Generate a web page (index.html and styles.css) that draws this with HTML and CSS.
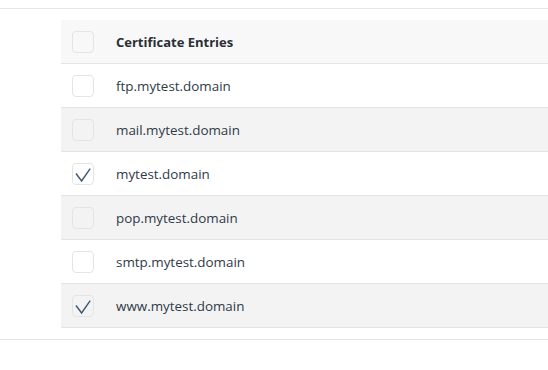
FILE: index.html
```html
<!DOCTYPE html>
<html lang="en">
<head>
  <meta charset="UTF-8" />
  <title>Certificate Entries</title>
  <link rel="stylesheet" href="styles.css">
</head>
<body>
  <div class="panel">
    <table class="entries">
      <thead>
        <tr>
          <th class="check-col"><span class="box"></span></th>
          <th>Certificate Entries</th>
        </tr>
      </thead>
      <tbody>
        <tr>
          <td class="check-col"><span class="box"></span></td>
          <td>ftp.mytest.domain</td>
        </tr>
        <tr>
          <td class="check-col"><span class="box"></span></td>
          <td>mail.mytest.domain</td>
        </tr>
        <tr>
          <td class="check-col"><span class="box checked"><svg viewBox="0 0 20 20"><path d="M3 9.5l5.6 7.5 8.6-12.3" /></svg></span></td>
          <td>mytest.domain</td>
        </tr>
        <tr>
          <td class="check-col"><span class="box"></span></td>
          <td>pop.mytest.domain</td>
        </tr>
        <tr>
          <td class="check-col"><span class="box"></span></td>
          <td>smtp.mytest.domain</td>
        </tr>
        <tr>
          <td class="check-col"><span class="box checked"><svg viewBox="0 0 20 20"><path d="M3 9.5l5.6 7.5 8.6-12.3" /></svg></span></td>
          <td>www.mytest.domain</td>
        </tr>
      </tbody>
    </table>
  </div>
</body>
</html>
```

FILE: styles.css
```css
html, body {
  margin: 0;
  padding: 0;
  background: #fff;
  font-family: 'Open Sans', sans-serif;
  color: #2f3a48;
}

.panel {
  margin-top: 8px;
  border-top: 1px solid #e4e4e4;
  border-bottom: 1px solid #e4e4e4;
  padding: 11px 0 11px 61px;
}

.entries {
  width: 100%;
  border-collapse: collapse;
  font-size: 13.4px;
}

.entries th,
.entries td {
  height: 43px;
  padding: 0;
  text-align: left;
  border-bottom: 1px solid #e4e4e4;
}

.entries th {
  font-weight: 700;
  font-size: 13px;
  background: #f8f8f8;
  color: #2a2f36;
}

.entries tbody tr:nth-child(even) td {
  background: #f3f3f3;
}

.check-col {
  width: 44px;
  padding-left: 11px !important;
}

.box {
  display: block;
  width: 20px;
  height: 20px;
  border: 1px solid #e4e4e4;
  border-radius: 4px;
  background: transparent;
}

.box svg {
  display: block;
  width: 20px;
  height: 20px;
}

.box svg path {
  fill: none;
  stroke: #3d5872;
  stroke-width: 1.4;
}
```
